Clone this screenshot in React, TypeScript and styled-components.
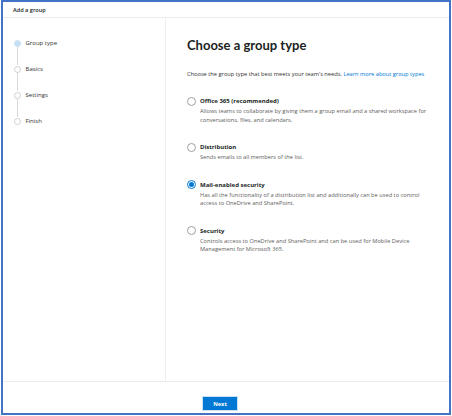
import React, { useState } from 'react';
import styled, { createGlobalStyle } from 'styled-components';

const GlobalStyle = createGlobalStyle`
    html, body {
        margin: 0;
        padding: 0;
        background: #ffffff;
    }
    body {
        font-family: 'Open Sans', 'Noto Sans', sans-serif;
        color: #323130;
    }
`;

const Frame = styled.div`
    box-sizing: border-box;
    display: flex;
    flex-direction: column;
    width: 450px;
    height: 415px;
    margin-left: 1px;
    border: 2px solid #4472c4;
    background: #ffffff;
`;

const Header = styled.div`
    box-sizing: border-box;
    height: 16px;
    padding: 0 0 0 10px;
    display: flex;
    align-items: center;
    font-size: 5.6px;
    font-weight: 600;
    color: #201f1e;
    border-bottom: 1px solid #edebe9;
`;

const Body = styled.div`
    flex: 1;
    display: flex;
    min-height: 0;
`;

const Nav = styled.nav`
    box-sizing: border-box;
    width: 163px;
    padding: 21px 0 0 10px;
    border-right: 1px solid #f0efee;
`;

const Step = styled.div`
    display: flex;
    flex-direction: column;
`;

const StepRow = styled.div`
    display: flex;
    align-items: center;
    gap: 5px;
    height: 8px;
    font-size: 6px;
    color: #323130;
`;

const StepDot = styled.span<{ $active?: boolean }>`
    box-sizing: border-box;
    width: 7px;
    height: 7px;
    border-radius: 50%;
    margin-left: 0.5px;
    background: ${p => (p.$active ? '#c7e0f4' : '#ffffff')};
    border: 1px solid ${p => (p.$active ? '#c7e0f4' : '#d2d0ce')};
`;

const StepLine = styled.span`
    width: 1px;
    height: 18px;
    margin-left: 3.5px;
    background: #dcdad8;
`;

const Main = styled.main`
    flex: 1;
    padding: 17px 20px 0 21px;
`;

const Title = styled.h1`
    margin: 0;
    font-family: Lato, 'Open Sans', sans-serif;
    font-size: 13px;
    font-weight: 700;
    color: #201f1e;
    line-height: 20px;
`;

const Intro = styled.p`
    margin: 15px 0 0;
    font-size: 5.7px;
    line-height: 8px;
    color: #323130;
`;

const Link = styled.a`
    color: #0078d4;
    text-decoration: none;
`;

const Options = styled.div`
    display: flex;
    flex-direction: column;
    gap: 18px;
    margin-top: 18px;
`;

const Option = styled.label`
    display: grid;
    grid-template-columns: 12px 1fr;
    column-gap: 1px;
    cursor: pointer;
`;

const Radio = styled.span<{ $checked?: boolean }>`
    box-sizing: border-box;
    width: 9px;
    height: 9px;
    border-radius: 50%;
    border: 1px solid ${p => (p.$checked ? '#0078d4' : '#a19f9d')};
    display: flex;
    align-items: center;
    justify-content: center;
    align-self: center;

    &::after {
        content: '';
        width: 5px;
        height: 5px;
        border-radius: 50%;
        background: ${p => (p.$checked ? '#0078d4' : 'transparent')};
    }
`;

const OptionTitle = styled.span`
    font-size: 6px;
    font-weight: 700;
    line-height: 10px;
    color: #201f1e;
`;

const OptionText = styled.span`
    grid-column: 2;
    margin-top: 1px;
    font-size: 5.7px;
    line-height: 8.5px;
    color: #605e5c;
    max-width: 235px;
`;

const Footer = styled.footer`
    box-sizing: border-box;
    height: 32px;
    border-top: 1px solid #edebe9;
    display: flex;
    align-items: flex-end;
    padding: 0 0 2px 199px;
`;

const NextButton = styled.button`
    box-sizing: border-box;
    width: 36px;
    height: 15px;
    border: 1px solid #c7e0f4;
    background: #0078d4;
    color: #ffffff;
    font-family: inherit;
    font-size: 5.7px;
    font-weight: 700;
    padding: 0;
    cursor: pointer;
`;

const steps = ['Group type', 'Basics', 'Settings', 'Finish'];

const groupTypes = [
    {
        id: 'o365',
        title: 'Office 365 (recommended)',
        text: 'Allows teams to collaborate by giving them a group email and a shared workspace for conversations, files, and calendars.',
    },
    {
        id: 'distribution',
        title: 'Distribution',
        text: 'Sends emails to all members of the list.',
    },
    {
        id: 'mail',
        title: 'Mail-enabled security',
        text: 'Has all the functionality of a distribution list and additionally can be used to control access to OneDrive and SharePoint.',
    },
    {
        id: 'security',
        title: 'Security',
        text: 'Controls access to OneDrive and SharePoint and can be used for Mobile Device Management for Microsoft 365.',
    },
];

export default function App() {
    const [selected, setSelected] = useState('mail');

    return (
        <>
            <GlobalStyle />
            <Frame>
                <Header>Add a group</Header>
                <Body>
                    <Nav>
                        {steps.map((s, i) => (
                            <Step key={s}>
                                <StepRow>
                                    <StepDot $active={i === 0} />
                                    {s}
                                </StepRow>
                                {i < steps.length - 1 && <StepLine />}
                            </Step>
                        ))}
                    </Nav>
                    <Main>
                        <Title>Choose a group type</Title>
                        <Intro>
                            Choose the group type that best meets your team's needs.{' '}
                            <Link href="#">Learn more about group types</Link>
                        </Intro>
                        <Options>
                            {groupTypes.map(g => (
                                <Option key={g.id} onClick={() => setSelected(g.id)}>
                                    <Radio $checked={selected === g.id} />
                                    <OptionTitle>{g.title}</OptionTitle>
                                    <OptionText>{g.text}</OptionText>
                                </Option>
                            ))}
                        </Options>
                    </Main>
                </Body>
                <Footer>
                    <NextButton>Next</NextButton>
                </Footer>
            </Frame>
        </>
    );
}
